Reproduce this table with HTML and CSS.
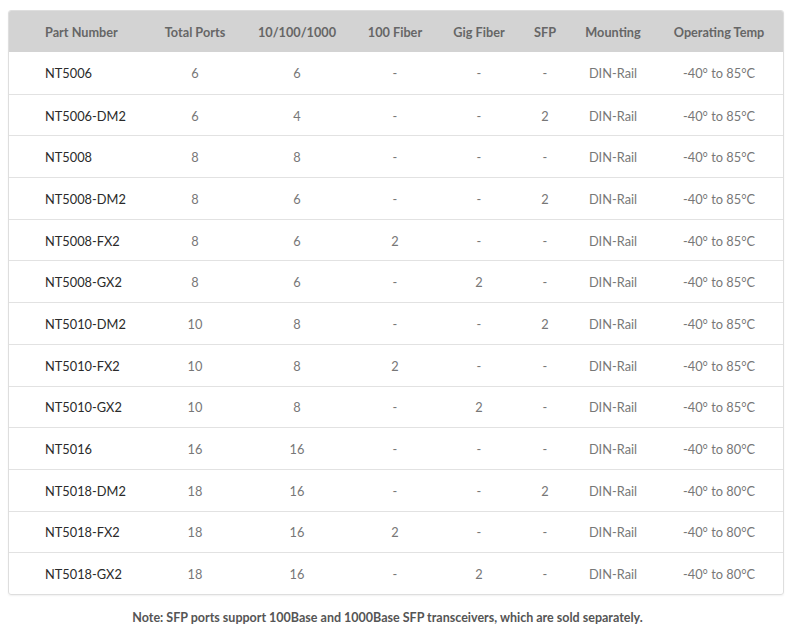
FILE: index.html
```html
<!DOCTYPE html>
<html>
<head>
<meta charset="utf-8">
<link rel="stylesheet" href="styles.css">
</head>
<body>
<div class="wrap">
<table class="spec">
<colgroup>
<col class="c1"><col class="c2"><col class="c3"><col class="c4"><col class="c5"><col class="c6"><col class="c7"><col class="c8">
</colgroup>
<thead>
<tr><th class="pn">Part Number</th><th>Total Ports</th><th>10/100/1000</th><th>100 Fiber</th><th>Gig Fiber</th><th>SFP</th><th>Mounting</th><th>Operating Temp</th></tr>
</thead>
<tbody>
<tr><td class="pn">NT5006</td><td>6</td><td>6</td><td>-</td><td>-</td><td>-</td><td>DIN-Rail</td><td>-40° to 85°C</td></tr>
<tr><td class="pn">NT5006-DM2</td><td>6</td><td>4</td><td>-</td><td>-</td><td>2</td><td>DIN-Rail</td><td>-40° to 85°C</td></tr>
<tr><td class="pn">NT5008</td><td>8</td><td>8</td><td>-</td><td>-</td><td>-</td><td>DIN-Rail</td><td>-40° to 85°C</td></tr>
<tr><td class="pn">NT5008-DM2</td><td>8</td><td>6</td><td>-</td><td>-</td><td>2</td><td>DIN-Rail</td><td>-40° to 85°C</td></tr>
<tr><td class="pn">NT5008-FX2</td><td>8</td><td>6</td><td>2</td><td>-</td><td>-</td><td>DIN-Rail</td><td>-40° to 85°C</td></tr>
<tr><td class="pn">NT5008-GX2</td><td>8</td><td>6</td><td>-</td><td>2</td><td>-</td><td>DIN-Rail</td><td>-40° to 85°C</td></tr>
<tr><td class="pn">NT5010-DM2</td><td>10</td><td>8</td><td>-</td><td>-</td><td>2</td><td>DIN-Rail</td><td>-40° to 85°C</td></tr>
<tr><td class="pn">NT5010-FX2</td><td>10</td><td>8</td><td>2</td><td>-</td><td>-</td><td>DIN-Rail</td><td>-40° to 85°C</td></tr>
<tr><td class="pn">NT5010-GX2</td><td>10</td><td>8</td><td>-</td><td>2</td><td>-</td><td>DIN-Rail</td><td>-40° to 85°C</td></tr>
<tr><td class="pn">NT5016</td><td>16</td><td>16</td><td>-</td><td>-</td><td>-</td><td>DIN-Rail</td><td>-40° to 80°C</td></tr>
<tr><td class="pn">NT5018-DM2</td><td>18</td><td>16</td><td>-</td><td>-</td><td>2</td><td>DIN-Rail</td><td>-40° to 80°C</td></tr>
<tr><td class="pn">NT5018-FX2</td><td>18</td><td>16</td><td>2</td><td>-</td><td>-</td><td>DIN-Rail</td><td>-40° to 80°C</td></tr>
<tr><td class="pn">NT5018-GX2</td><td>18</td><td>16</td><td>-</td><td>2</td><td>-</td><td>DIN-Rail</td><td>-40° to 80°C</td></tr>
</tbody>
</table>
<p class="note">Note: SFP ports support 100Base and 1000Base SFP transceivers, which are sold separately.</p>
</div>
</body>
</html>
```
FILE: styles.css
```css
html, body {
  margin: 0;
  padding: 0;
  background: #fff;
}
body {
  font-family: Lato, "Open Sans", sans-serif;
}
.wrap {
  padding: 10px 10px 0 8px;
}
.spec {
  width: 775px;
  table-layout: fixed;
  border-collapse: separate;
  border-spacing: 0;
  border: 1px solid #dedede;
  border-radius: 3px;
  overflow: hidden;
  box-shadow: 0 1px 2px rgba(0,0,0,0.06);
}
.c1 { width: 138px; }
.c2 { width: 96px; }
.c3 { width: 108px; }
.c4 { width: 88px; }
.c5 { width: 80px; }
.c6 { width: 52px; }
.c7 { width: 84px; }
.c8 { width: 128px; }
.spec th {
  background: #d3d3d3;
  color: #666;
  font-weight: 700;
  font-size: 12.7px;
  height: 41px;
  padding: 0;
  text-align: center;
  vertical-align: middle;
}
.spec td {
  color: #777;
  font-size: 12.8px;
  height: 39.69px;
  padding: 1px 0 0;
  text-align: center;
  vertical-align: middle;
  border-top: 1px solid #e2e2e2;
}
.spec tbody tr:first-child td {
  border-top: none;
  height: 40.69px;
}
.spec .pn {
  text-align: left;
  padding-left: 36px;
}
.spec td.pn {
  color: #2a2a2a;
}
.note {
  margin: 15px 16px 0 0;
  text-align: center;
  font-size: 12.5px;
  font-weight: 700;
  color: #555;
}
```
